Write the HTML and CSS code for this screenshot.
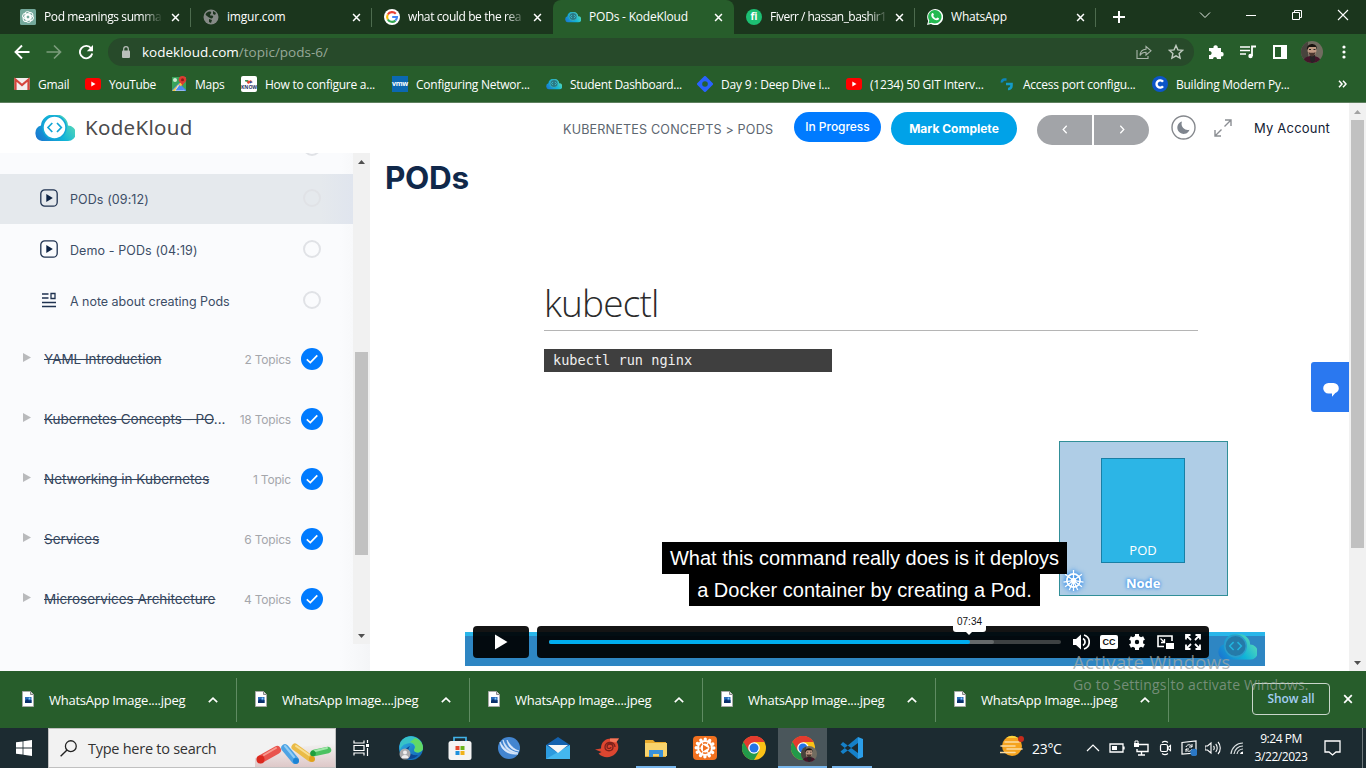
FILE: index.html
```html
<!DOCTYPE html>
<html lang="en">
<head>
<meta charset="utf-8">
<title>PODs - KodeKloud</title>
<link rel="stylesheet" href="styles.css">
</head>
<body>
<svg class="defs" width="0" height="0">
  <defs>
    <linearGradient id="cloudFill" x1="0" y1="0.8" x2="1" y2="0.3"><stop offset="0" stop-color="#1a78d0"/><stop offset=".5" stop-color="#10b4d8"/><stop offset="1" stop-color="#5fdcb4"/></linearGradient>
    <linearGradient id="edgeFill" x1="0" y1="0" x2="1" y2="1"><stop offset="0" stop-color="#2fb8e8"/><stop offset="1" stop-color="#0f5cb0"/></linearGradient>
    <symbol id="close" viewBox="0 0 10 10"><path d="M1.2 1.2 8.8 8.8M8.8 1.2 1.2 8.8" stroke="currentColor" stroke-width="1.7" fill="none"/></symbol>
    <symbol id="cloud" viewBox="0 0 40 26"><path d="M6 10.500a8 8 0 0 0 1 15.500h26a7.500 7.500 0 0 0 0-15.500A13 11 0 0 0 6 10.500z" fill="url(#cloudFill)"/></symbol>
    <symbol id="youtube" viewBox="0 0 16 12"><rect width="16" height="12" rx="3" fill="#f00"/><path d="M6.300 3.500v5l4.200-2.500z" fill="#fff"/></symbol>
    <symbol id="chrome" viewBox="0 0 24 24"><circle cx="12" cy="12" r="12" fill="#fbc116"/><path d="M12 12 1.600 6A12 12 0 0 1 22.400 6H12z" fill="#e33b2e"/><path d="M12 12 1.600 6A12 12 0 0 0 12 24l5.200-9z" fill="#229a4a"/><path d="M12 6h10.400A12 12 0 0 0 1.600 6l5.200 9z" fill="#e33b2e"/><circle cx="12" cy="12" r="5.800" fill="#fff"/><circle cx="12" cy="12" r="4.500" fill="#2374e8"/></symbol>
    <symbol id="face" viewBox="0 0 22 22"><clipPath id="faceClip"><circle cx="11" cy="11" r="11"/></clipPath><g clip-path="url(#faceClip)"><rect width="22" height="22" fill="#716c60"/><rect width="7" height="22" fill="#48443d"/><path d="M2 22c0-6 5-7 9-7s9 1 9 7z" fill="#44162a"/><path d="M9 14h5v6l-3 2-2-3z" fill="#262326"/><ellipse cx="11" cy="9" rx="4.500" ry="6" fill="#c09a83"/><path d="M6 9C5 1 17 1 16 9l-1-3H8z" fill="#18120f"/><path d="M7.500 11c1 6 6 6 7 0l-1.500.800h-4z" fill="#4b372f"/><path d="M8 8.500h2M12.500 8.500h2" stroke="#222"/></g></symbol>
    <symbol id="globe" viewBox="0 0 16 16"><circle cx="8" cy="8" r="7.500" fill="#858a86"/><path d="M3 4.500c2-2 4-2.500 5-1.500s-1 2-1 3 2 0 3 1-1 3-2 2.500S5 8 4 7 2 6 3 4.500zM10 2l3 2-1 2-2-1zM6 10l3 1-1 3-2-1z" fill="#1c331e"/></symbol>
    <symbol id="jpeg" viewBox="0 0 12 16"><path d="M.5.5h8l3 3v12H.5z" fill="#fff" stroke="#a8aaa8"/><path d="M8.500.5v3h3" fill="#d8d8d8" stroke="#888"/><rect x="3" y="6" width="6.500" height="6" fill="#2b6cb8"/><path d="m3 10 2-2 2 1.500 2.500-.5v3H3z" fill="#0b2f6a"/><circle cx="7.500" cy="7.500" r=".9" fill="#8acbff"/></symbol>
    <symbol id="up" viewBox="0 0 10 6"><path d="m.8 5.200 4.200-4 4.200 4" fill="none" stroke="currentColor" stroke-width="1.600"/></symbol>
    <symbol id="playbox" viewBox="0 0 18 18"><rect x=".8" y=".8" width="16.400" height="16.400" rx="4" fill="none" stroke="#1f3250" stroke-width="1.300"/><path d="M6.300 5v8l6.500-4z" fill="#0d2344"/></symbol>
    <symbol id="tri" viewBox="0 0 8 9"><path d="M0 0v9l8-4.500z" fill="#b9babc"/></symbol>
    <symbol id="check" viewBox="0 0 22 22"><circle cx="11" cy="11" r="11" fill="#007bff"/><path d="m5.800 11.400 3.500 3.200 7-7.200" fill="none" stroke="#fff" stroke-width="1.700"/></symbol>
  </defs>
</svg>

<div class="tabstrip">
  <div class="tab"><svg class="fav" viewBox="0 0 16 16"><rect width="16" height="16" rx="1.500" fill="#74a99b"/><g fill="none" stroke="#fff" stroke-width=".9"><rect x="5" y="2.500" width="5" height="8" rx="2.500"/><rect x="5" y="2.500" width="5" height="8" rx="2.500" transform="rotate(60 8 8)"/><rect x="5" y="2.500" width="5" height="8" rx="2.500" transform="rotate(120 8 8)"/><rect x="5" y="2.500" width="5" height="8" rx="2.500" transform="rotate(180 8 8)"/><rect x="5" y="2.500" width="5" height="8" rx="2.500" transform="rotate(240 8 8)"/><rect x="5" y="2.500" width="5" height="8" rx="2.500" transform="rotate(300 8 8)"/></g></svg><span class="ttl fade">Pod meanings summa</span><svg class="x"><use href="#close"/></svg></div>
  <div class="tab"><svg class="fav"><use href="#globe"/></svg><span class="ttl">imgur.com</span><svg class="x"><use href="#close"/></svg></div>
  <div class="tab flat"><svg class="fav" viewBox="0 0 16 16"><circle cx="8" cy="8" r="8" fill="#fff"/><g fill="none" stroke-width="2.100"><path d="M11.800 4.800A5 5 0 0 0 3.800 5.500" stroke="#ea4335"/><path d="M3.800 5.500a5 5 0 0 0 0 5" stroke="#fbbc05"/><path d="M3.800 10.500a5 5 0 0 0 7.600 1.100" stroke="#34a853"/><path d="M11.400 11.600A5 5 0 0 0 13 8H8.200" stroke="#4285f4"/></g></svg><span class="ttl fade">what could be the rea</span><svg class="x"><use href="#close"/></svg></div>
  <div class="tab active"><svg class="fav" viewBox="0 0 16 16"><use href="#cloud" y="3" width="16" height="10.500"/><circle cx="8" cy="7.500" r="4" fill="#2b7a85" stroke="#39b9cc" stroke-width=".7"/><path d="m7 6-1.500 1.500L7 9m2-3 1.500 1.500L9 9" fill="none" stroke="#44cbd8" stroke-width=".7"/></svg><span class="ttl">PODs - KodeKloud</span><svg class="x"><use href="#close"/></svg></div>
  <div class="tab"><span class="fav fiverr">fi</span><span class="ttl fade tight">Fiverr / hassan_bashir1</span><svg class="x"><use href="#close"/></svg></div>
  <div class="tab"><svg class="fav" viewBox="0 0 16 16"><path d="M0 16 1.200 12A8 8 0 1 1 4 14.900z" fill="#fff"/><path d="m1.500 14.500.8-3A6.700 6.700 0 1 1 4.800 13.700z" fill="#24b951"/><path d="M5 4.300c1-.9 1.200-.3 1.900 1.300.2.600-.7 1-.6 1.300.5 1.200 1.700 2.200 2.800 2.600.5 0 .9-1.200 1.300-1 2 .9 2 .9 1.300 2C10 12.500 6 10.500 4.700 8 4 6.500 4.100 5.200 5 4.300z" fill="#fff"/></svg><span class="ttl">WhatsApp</span><svg class="x"><use href="#close"/></svg></div>
  <svg class="plus" viewBox="0 0 12 12"><path d="M6 0v12M0 6h12" stroke="#fff" stroke-width="2"/></svg>
  <div class="win">
    <svg viewBox="0 0 12 12"><path d="m1 3.500 5 5 5-5" fill="none" stroke="#e5ebe5"/></svg>
    <svg viewBox="0 0 12 12"><path d="M1 6.500h10" stroke="#fff"/></svg>
    <svg viewBox="0 0 12 12"><path d="M1.500 3.500h7v7h-7zM3.500 3.500v-2h7v7h-2" fill="none" stroke="#fff"/></svg>
    <svg viewBox="0 0 12 12"><path d="m1 1 10 10M11 1 1 11" stroke="#fff" stroke-width="1.100"/></svg>
  </div>
</div>

<div class="toolbar">
  <svg class="nav" viewBox="0 0 16 16"><path d="M15.500 8H2M8 1.500 1.500 8 8 14.500" fill="none" stroke="#fff" stroke-width="1.900"/></svg>
  <svg class="nav dim" viewBox="0 0 16 16"><path d="M.5 8H14M8 1.500 14.500 8 8 14.500" fill="none" stroke="#7c9c7c" stroke-width="1.700"/></svg>
  <svg class="nav" viewBox="0 0 16 16"><path d="M13.200 4.500A6.200 6.200 0 1 0 14.200 9.500" fill="none" stroke="#fff" stroke-width="1.900"/><path d="M15 1v6.200H8.800z" fill="#fff"/></svg>
  <div class="omni">
    <svg class="lock" viewBox="0 0 8 12"><rect y="4.500" width="8" height="7.500" rx="1" fill="#b9bfba"/><path d="M1.700 5V3a2.300 2.300 0 0 1 4.600 0v2" fill="none" stroke="#b9bfba" stroke-width="1.200"/></svg>
    <span class="url">kodekloud.com<i>/topic/pods-6/</i></span>
    <svg class="share" viewBox="0 0 16 16"><path d="M1 6v8.500h11V12M4 11.500c.3-4 2.500-6 6-6.200V2.500l5 4.300-5 4.200V8.300c-2.600 0-4.500.7-6 3.200z" fill="none" stroke="#a9b6aa" stroke-width="1.100"/></svg>
    <svg class="star" viewBox="0 0 16 16"><path d="m8 1.500 1.900 4.400 4.800.4-3.600 3.200 1 4.700L8 11.800l-4.100 2.400 1-4.700L1.300 6.300l4.800-.4z" fill="none" stroke="#c0cbc0" stroke-width="1.400"/></svg>
  </div>
  <div class="actions">
    <svg viewBox="0 0 16 16"><path d="M1 4h4.500a2.200 2.200 0 1 1 4.200 0H13v4a2.200 2.200 0 1 1 0 4.300V15H9a2 2 0 1 0-4 0H1v-4a2 2 0 1 0 0-3.800z" fill="#fff"/></svg>
    <svg viewBox="0 0 16 16"><path d="M0 3h10M0 6.500h10M0 10h6" stroke="#fff" stroke-width="1.700"/><path d="M12 12V2.500h4" fill="none" stroke="#fff" stroke-width="1.800"/><circle cx="10.500" cy="12" r="2.200" fill="#fff"/></svg>
    <svg viewBox="0 0 16 16"><path d="M2 2h12v12H2z" fill="none" stroke="#fff" stroke-width="2"/><path d="M9 2h5v12H9z" fill="#fff"/></svg>
    <svg class="me"><use href="#face"/></svg>
    <svg viewBox="0 0 16 16"><g fill="#fff"><circle cx="8" cy="3" r="1.600"/><circle cx="8" cy="8" r="1.600"/><circle cx="8" cy="13" r="1.600"/></g></svg>
  </div>
</div>

<div class="bookmarks">
  <div class="bm"><svg viewBox="0 0 16 16"><rect x=".5" y="2" width="15" height="12" rx="1" fill="#f3eeee"/><path d="M1.500 14V3.500L8 9l6.500-5.500V14" fill="none" stroke="#d6453c" stroke-width="2.200"/></svg><span>Gmail</span></div>
  <div class="bm"><svg viewBox="0 -2 16 16"><use href="#youtube" width="16" height="12"/></svg><span>YouTube</span></div>
  <div class="bm"><svg viewBox="0 0 16 16"><path d="M1 1h14v14H1z" fill="#39a35a"/><path d="M1 14 8 7l7 7v1H1z" fill="#4a89f3"/><path d="M1 15 12 4l2 2-9 9z" fill="#f5ca43"/><path d="m7 9 7 6H4z" fill="#e8ebe8"/><path d="m8.500 9 5 5.500h-9z" fill="#4a89f3"/><circle cx="4" cy="4" r="2" fill="#ceebd1"/><path d="M11.500 0a3.800 3.800 0 0 1 3.800 3.800c0 2.500-2.800 3-3.800 6.500-1-3.500-3.800-4-3.800-6.500A3.800 3.800 0 0 1 11.500 0z" fill="#dc3c31"/><circle cx="11.500" cy="3.800" r="1.500" fill="#8c1d19"/></svg><span>Maps</span></div>
  <div class="bm"><span class="know"><svg viewBox="0 0 16 7"><path d="M5 3c2-2 3 1 5-1l1 2-4 2z" fill="#e4462e"/><path d="M4 2h3v1.500H4z" fill="#3b9a5d"/><path d="m9 3 3 1-3 1.500z" fill="#2b4e9d"/></svg><b>KNOW</b></span><span>How to configure a...</span></div>
  <div class="bm"><span class="vmw">vmw</span><span>Configuring Networ...</span></div>
  <div class="bm"><svg viewBox="0 0 16 16"><use href="#cloud" y="3" width="16" height="10.500"/><circle cx="8" cy="7.500" r="4" fill="#2b7a85" stroke="#39b9cc" stroke-width=".7"/><path d="m7 6-1.500 1.500L7 9m2-3 1.500 1.500L9 9" fill="none" stroke="#44cbd8" stroke-width=".7"/></svg><span>Student Dashboard...</span></div>
  <div class="bm"><svg viewBox="0 0 16 16"><path d="m8 1.500 6.500 6.500L8 14.500 1.500 8z" fill="#2962ff" stroke="#2962ff" stroke-width="3" stroke-linejoin="round"/><circle cx="8" cy="8" r="2.800" fill="#255f38"/></svg><span>Day 9 : Deep Dive i...</span></div>
  <div class="bm"><svg viewBox="0 -2 16 16"><use href="#youtube" width="16" height="12"/></svg><span>(1234) 50 GIT Interv...</span></div>
  <div class="bm"><svg viewBox="0 0 16 16"><path d="M7.500 3.500H5.500a2.500 2.500 0 0 0-2.500 3" fill="none" stroke="#0d86bd" stroke-width="2.600"/><path d="M7 8h5.500v1.500a3.300 3.300 0 0 1-3.500 3.500" fill="none" stroke="#149cc8" stroke-width="2.600"/></svg><span>Access port configu...</span></div>
  <div class="bm"><svg viewBox="0 0 16 16"><circle cx="8" cy="8" r="8" fill="#0b55c8"/><path d="M11 5.800a3.600 3.600 0 1 0 0 4.400" fill="none" stroke="#fff" stroke-width="2.400"/></svg><span>Building Modern Py...</span></div>
  <svg class="more" viewBox="0 0 9 8"><path d="m1 .8 3 3.200-3 3.200m4-6.400 3 3.200-3 3.200" fill="none" stroke="#fff" stroke-width="1.500"/></svg>
</div>

<div class="page">
  <div class="site">
    <header class="head">
      <svg class="logo" viewBox="0 0 40 26"><use href="#cloud" width="40" height="26"/><circle cx="19.500" cy="12.500" r="11.500" fill="#fff" stroke="#12a9d8" stroke-width="1.500"/><path d="m17.300 8-4.300 4.500 4.300 4.500m4.700-9 4.300 4.500-4.300 4.500" fill="none" stroke="#10a5d5" stroke-width="1.700"/></svg>
      <span class="brand">KodeKloud</span>
      <span class="crumb">KUBERNETES CONCEPTS &gt; PODS</span>
      <span class="progress">In Progress</span>
      <span class="mark">Mark Complete</span>
      <span class="pager"><span><svg viewBox="0 0 6 9"><path d="M4.700.8 1.200 4.500l3.500 3.700" fill="none" stroke="#fff" stroke-width="1.300"/></svg></span><span><svg viewBox="0 0 6 9"><path d="m1.300.8 3.500 3.700-3.500 3.700" fill="none" stroke="#fff" stroke-width="1.300"/></svg></span></span>
      <svg class="moon" viewBox="0 0 25 25"><circle cx="12.500" cy="12.500" r="11.500" fill="none" stroke="#85888d" stroke-width="1.400"/><path d="M11 6.500a6.300 6.300 0 1 0 7.500 8.300A6.300 6.300 0 0 1 11 6.500z" fill="#7f858e"/></svg>
      <svg class="expand" viewBox="0 0 18 18"><path d="M10.500 7.500 17 1M11 1h6v6M7.500 10.500 1 17m0-6v6h6" fill="none" stroke="#8b8e93" stroke-width="1.400"/></svg>
      <span class="account">My Account</span>
    </header>
    <div class="body">
      <aside class="side">
        <div class="list">
          <div class="lesson cut"><span></span><span class="name">p</span><i class="ring"></i></div>
          <div class="lesson sel"><svg><use href="#playbox"/></svg><span class="name">PODs (09:12)</span><i class="ring"></i></div>
          <div class="lesson"><svg><use href="#playbox"/></svg><span class="name">Demo - PODs (04:19)</span><i class="ring"></i></div>
          <div class="lesson"><svg viewBox="0 0 18 18"><path d="M2 3h6.500M2 7h6.500M2 11.500h14M2 15.500h14M11 2.500h4v5h-4z" fill="none" stroke="#1f3250" stroke-width="1.300"/></svg><span class="name">A note about creating Pods</span><i class="ring"></i></div>
          <div class="topics">
            <div class="topic"><svg class="t"><use href="#tri"/></svg><span class="name"><s>YAML Introduction</s></span><span class="n">2 Topics</span><svg class="ok"><use href="#check"/></svg></div>
            <div class="topic"><svg class="t"><use href="#tri"/></svg><span class="name"><s>Kubernetes Concepts - PO</s>...</span><span class="n">18 Topics</span><svg class="ok"><use href="#check"/></svg></div>
            <div class="topic"><svg class="t"><use href="#tri"/></svg><span class="name"><s>Networking in Kubernetes</s></span><span class="n">1 Topic</span><svg class="ok"><use href="#check"/></svg></div>
            <div class="topic"><svg class="t"><use href="#tri"/></svg><span class="name"><s>Services</s></span><span class="n">6 Topics</span><svg class="ok"><use href="#check"/></svg></div>
            <div class="topic"><svg class="t"><use href="#tri"/></svg><span class="name"><s>Microservices Architecture</s></span><span class="n">4 Topics</span><svg class="ok"><use href="#check"/></svg></div>
          </div>
        </div>
        <div class="bar inner"><svg viewBox="0 0 7 4"><path d="M0 4 3.500 0 7 4z" fill="#505050"/></svg><i></i><svg viewBox="0 0 7 4"><path d="M0 0h7L3.500 4z" fill="#505050"/></svg></div>
      </aside>
      <main class="main">
        <h1>PODs</h1>
        <div class="video">
          <div class="slide-title">kubectl</div>
          <div class="code">kubectl run nginx</div>
          <div class="node"><div class="pod">POD</div>
            <svg class="helm" viewBox="0 0 20 20"><g fill="none" stroke="#fff" stroke-width="1.200"><circle cx="10" cy="10" r="6.300" stroke-width="1.600"/><circle cx="10" cy="10" r="2"/><path d="M10 0v20M2 4l16 12M2 16 18 4M.5 11.500 10 10l9.500 1.500M6 19l4-9 4 9"/></g></svg>
            <b>Node</b></div>
          <div class="caption"><span>What this command really does is it deploys</span><span>a Docker container by creating a Pod.</span></div>
          <div class="band"><svg class="bandlogo" viewBox="0 0 40 26"><use href="#cloud" width="40" height="26"/><circle cx="18" cy="12" r="11" fill="#257aa8" stroke="#2a9dcc" stroke-width="1.500"/><path d="m16 8-4 4 4 4m4-8 4 4-4 4" fill="none" stroke="#22b5df" stroke-width="1.500"/></svg></div>
          <div class="controls">
            <div class="play"><svg viewBox="0 0 14 16"><path d="M1 .5v15l12.500-7.500z" fill="#fff"/></svg></div>
            <div class="strip">
              <div class="track"><i class="buf"></i><i class="done"></i><span class="tip">07:34</span></div>
              <svg viewBox="0 0 18 18"><path d="M1 6v6h3l5 4.500v-15L4 6z" fill="#fff"/><path d="M11 5.500a4 4 0 0 1 0 7M12 2a7.300 7.300 0 0 1 0 14" fill="none" stroke="#fff" stroke-width="1.700"/></svg>
              <span class="cc">CC</span>
              <svg viewBox="0 0 18 18"><circle cx="9" cy="9" r="4.200" fill="none" stroke="#fff" stroke-width="4"/><path d="M9 1v3M9 14v3M2 5l3 1.500M13 11.500l3 1.500M2 13l3-1.500M13 6.500 16 5" stroke="#fff" stroke-width="4"/></svg>
              <svg viewBox="0 0 18 18"><path d="M8 13.500H2V3h14v5" fill="none" stroke="#fff" stroke-width="1.600"/><path d="M10 10h8v6h-8z" fill="#fff"/><path d="m4.500 5.500 4 4m0-3.500v3.500H5" fill="none" stroke="#fff" stroke-width="1.300"/></svg>
              <svg viewBox="0 0 18 18"><path d="M2 6.500V2h4.500M11.500 2H16v4.500M16 11.500V16h-4.500M6.500 16H2v-4.500M2.500 2.500l4.500 4.500M15.500 2.500 11 7M15.500 15.500 11 11M2.500 15.500 7 11" fill="none" stroke="#fff" stroke-width="1.800"/></svg>
            </div>
          </div>
        </div>
        <div class="chat"><svg viewBox="0 0 16 14"><path d="M5.500 0h5a5.300 5.300 0 0 1 5.300 5.300c0 2.500-1.500 4-3.500 4.800L9 13.800V10.600H5.500A5.300 5.300 0 0 1 5.500 0z" fill="#fff"/></svg></div>
      </main>
    </div>
  </div>
  <div class="bar outer"><svg viewBox="0 0 7 4"><path d="M0 4 3.500 0 7 4z" fill="#a3a3a3"/></svg><i></i><svg viewBox="0 0 7 4"><path d="M0 0h7L3.500 4z" fill="#505050"/></svg></div>
</div>

<div class="downloads">
  <div class="dl"><svg class="f"><use href="#jpeg"/></svg><span>WhatsApp Image....jpeg</span><svg class="u"><use href="#up"/></svg></div>
  <div class="dl"><svg class="f"><use href="#jpeg"/></svg><span>WhatsApp Image....jpeg</span><svg class="u"><use href="#up"/></svg></div>
  <div class="dl"><svg class="f"><use href="#jpeg"/></svg><span>WhatsApp Image....jpeg</span><svg class="u"><use href="#up"/></svg></div>
  <div class="dl"><svg class="f"><use href="#jpeg"/></svg><span>WhatsApp Image....jpeg</span><svg class="u"><use href="#up"/></svg></div>
  <div class="dl"><svg class="f"><use href="#jpeg"/></svg><span>WhatsApp Image....jpeg</span><svg class="u"><use href="#up"/></svg></div>
  <div class="all">Show all</div>
  <svg class="x"><use href="#close"/></svg>
</div>

<div class="taskbar">
  <div class="start"><svg viewBox="0 0 16 16"><path d="M0 2.300 6.600 1.400v6.200H0zM7.400 1.300 16 0v7.600H7.400zM0 8.400h6.600v6.200L0 13.700zM7.400 8.400H16V16l-8.600-1.200z" fill="#fff"/></svg></div>
  <div class="search">
    <svg class="glass" viewBox="0 0 16 16"><circle cx="10.200" cy="5.800" r="5.100" fill="none" stroke="#222" stroke-width="1.200"/><path d="M6.600 9.400.6 15.400" stroke="#222" stroke-width="1.300"/></svg>
    <span>Type here to search</span>
    <svg class="chalk" viewBox="0 0 80 38"><defs><linearGradient id="pinkish" x2="0" y2="1"><stop offset="0" stop-color="#f2f2f2"/><stop offset="1" stop-color="#dec8c8"/></linearGradient></defs><path d="M0 38V29L26 20 80 14v24z" fill="url(#pinkish)"/><g stroke-linecap="round"><path d="M6 30 22 21" stroke="#e9534d" stroke-width="8"/><path d="m9 26 12-7" stroke="#f69a8e" stroke-width="2"/><circle cx="5.500" cy="30.500" r="4" fill="#db291e"/><path d="m30 19 10 12" stroke="#4da3e4" stroke-width="7.500"/><path d="m30 17 9 11" stroke="#93cdf4" stroke-width="2"/><circle cx="41" cy="32" r="3" fill="#1c83d4"/><path d="m40 18 15 11" stroke="#eabb47" stroke-width="7"/><path d="m41 17 13 9" stroke="#f8de92" stroke-width="2"/><circle cx="57" cy="30" r="3" fill="#e0a11a"/><path d="m59 24 14-3" stroke="#4bc261" stroke-width="6.500"/><path d="m60 22 12-3" stroke="#a2e7ab" stroke-width="2"/><circle cx="58" cy="24.500" r="2.800" fill="#1f9e3d"/></g></svg>
  </div>
  <div class="apps">
    <div><svg class="s16" viewBox="0 0 16 16"><path d="M1 .5v2.500h10V.5M1 15.500V13h10v2.500M1 5.500h10v5H1zM14.500 0v3M14.500 8v8" fill="none" stroke="#fff" stroke-width="1.200"/><path d="M13 4h3v3h-3z" fill="#fff"/></svg></div>
    <div><svg viewBox="0 0 24 24"><circle cx="12" cy="12" r="12" fill="url(#edgeFill)"/><path d="M1 8C4-2 22-3 24 12c0 5-9 6-9 2 3-5-3-8-8-6-2 0-5 3-6 6z" fill="#37c2c7"/><path d="M16 2c6 2 8 6 8 10 0 5-9 6-9 2 3-4 0-7-4-8z" fill="#61d966"/><path d="M11 10c-4 5 0 10 8 9-3 4-9 5-12 3-3-5-1-10 4-12z" fill="#0c4693"/><circle cx="6" cy="18" r="5.500" fill="#a9aaac"/><circle cx="6" cy="16.500" r="2" fill="#eee"/><path d="M2.500 22c0-4 7-4 7 0z" fill="#eee"/></svg></div>
    <div><svg viewBox="0 0 24 24"><path d="M6 6V1.500h12V6" fill="none" stroke="#41b2e8" stroke-width="1.700"/><rect x=".5" y="5" width="23" height="19" rx="2.500" fill="#f4f4f4"/><path d="M7.500 10h4v4h-4z" fill="#e3482e"/><path d="M12.500 10h4v4h-4z" fill="#6bb319"/><path d="M7.500 15h4v4h-4z" fill="#1e91dd"/><path d="M12.500 15h4v4h-4z" fill="#f0b31a"/></svg></div>
    <div><svg viewBox="0 0 24 24"><circle cx="12" cy="12" r="11" fill="#4385d0"/><path d="M3 6c1 8 8 13 18 12-9-1-14-5-18-12zM6 4c1 8 6 13 15 13-8-2-12-6-15-13zM10 4c1 6 4 10 12 11-6-2-9-6-12-11z" fill="#dce9fb" stroke="#dce9fb" stroke-width=".7"/></svg></div>
    <div><svg viewBox="0 0 24 24"><path d="M0 9 12 1l12 8v14H0z" fill="#1461ae"/><path d="m0 9v14h24V9l-12 8z" fill="#2c9bdf"/><path d="m0 23 12-7 12-7v14z" fill="#44b7ef"/><path d="M2 9h20l-10 8z" fill="#f7f7f7"/></svg></div>
    <div><svg viewBox="0 0 24 24"><path d="M0 13.500l6-1c0-7 5-10 10-10h8l-2.500 3c3 5 2 9-1 12-5 5-12 5-17 0l3-1.500z" fill="#dc4630"/><path d="M15 2.500h9l-3 4-6-1z" fill="#f4785a"/><path d="M20 11c0-6-10-6-10 0 0 5 8 5 8 0 0-4-6-4-6 0 0 2 4 2 4 0" fill="none" stroke="#7c211b" stroke-width="1.300"/></svg></div>
    <div class="run wide"><svg viewBox="0 0 24 24"><path d="M1 4h8l2 2h11v15H1z" fill="#e8aa2c"/><path d="M1 7h22v13H1z" fill="#f8d36c"/><path d="M5 21v-7h14v7h-4v-3H9v3z" fill="#3a92db"/></svg></div>
    <div><svg viewBox="0 0 24 24"><rect width="24" height="24" rx="4" fill="#f1711f"/><circle cx="12" cy="12" r="8.800" fill="none" stroke="#fff" stroke-width="3.400" stroke-linecap="round" stroke-dasharray=".01 4.598"/><circle cx="12" cy="12" r="8" fill="#fff"/><circle cx="12" cy="12" r="5.200" fill="none" stroke="#f1711f" stroke-width="1.600" stroke-dasharray="4.400 1.050"/><path d="M10 8.800v6.400l5.500-3.200z" fill="#f1711f"/></svg></div>
    <div><svg><use href="#chrome"/></svg></div>
    <div class="run hot"><svg viewBox="0 0 24 24"><use href="#chrome" width="24" height="24"/><use href="#face" x="10" y="10" width="16" height="16"/></svg></div>
    <div class="run"><svg viewBox="0 0 24 24"><path d="m18 1 5 2v18l-5 2z" fill="#2b9ee9"/><path d="M18 1v6L3 18 .5 15.500zM18 23v-6L3 6 .5 8.500z" fill="#1580c8"/></svg></div>
  </div>
  <div class="weather"><svg viewBox="0 0 24 22"><circle cx="12" cy="11" r="10" fill="#f5a31e"/><path d="M6 3h12a10 10 0 0 0-12 0z" fill="#fbd33d"/><path d="M5 7h14M1 11h14M7 14h15M0 17.500h15" stroke="#fbdba0" stroke-width="1.600" stroke-linecap="round"/><circle cx="21" cy="4" r="3" fill="#c42b1c"/></svg><span>23°C</span></div>
  <div class="tray">
    <svg viewBox="0 0 16 16"><path d="m2 11 6-6 6 6" fill="none" stroke="#fff" stroke-width="1.200"/></svg>
    <svg viewBox="0 0 16 16"><path d="M1 4h13v8H1zM15 6.500v3" fill="none" stroke="#fff" stroke-width="1.300"/><path d="M3 6h5v4H3z" fill="#fff"/></svg>
    <svg viewBox="0 0 16 16"><path d="M6 4.500h9v7H4V9M8.500 12v3M5 15h7" fill="none" stroke="#fff" stroke-width="1.400"/><path d="M1 3h5v4H1z" fill="#fff"/><path d="M2 3V1h3v2" fill="none" stroke="#fff"/></svg>
    <svg viewBox="0 0 16 16"><rect x="3.500" y="4.500" width="7" height="7" rx="1.500" fill="none" stroke="#fff" stroke-width="1.200"/><path d="m11 7.500 2.500-2v5L11 8.500M5 2.500c2-1.500 4-1.500 6 0M5 13.500c2 1.500 4 1.500 6 0" fill="none" stroke="#fff" stroke-width="1.100"/></svg>
    <svg viewBox="0 0 16 16"><path d="M1 2.500 15 1v12l-14 1z" fill="none" stroke="#fff" stroke-width="1.200"/><path d="M5 7c1-3 5-3 6 0m0-3v3H8M11 9c-1 3-5 3-6 0m0 3V9h3" fill="none" stroke="#fff"/><circle cx="13" cy="12.500" r="3.700" fill="#2b78c5"/></svg>
    <svg viewBox="0 0 16 16"><path d="M0 6v4h2.500L6 13V3L2.500 6zM8.500 6c1 1 1 3 0 4M10.700 4c2 2 2 6 0 8M13 2c3 3 3 9 0 12" fill="none" stroke="#fff" stroke-width="1.100"/></svg>
    <svg viewBox="0 0 16 16"><path d="M2 14A12 12 0 0 1 14 3M5 14a9 9 0 0 1 9-8M8 14a6 6 0 0 1 6-5" fill="none" stroke="#dce2e3" stroke-width="1.200"/><path d="M11 14a3 3 0 0 1 3-2.500V14z" fill="#fff"/></svg>
  </div>
  <div class="clock"><span>9:24 PM</span><span>3/22/2023</span></div>
  <svg class="note" viewBox="0 0 17 16"><path d="M1 1h15v11h-4l-3.500 3L5 12H1z" fill="none" stroke="#fff" stroke-width="1.300"/></svg>
  <i class="peek"></i>
</div>

<div class="watermark"><span>Activate Windows</span><span>Go to Settings to activate Windows.</span></div>
</body>
</html>
```
FILE: styles.css
```css
* { box-sizing: border-box; }
body { margin: 0; width: 1366px; height: 768px; overflow: hidden; display: flex; flex-direction: column; background: #fff; font-family: "Open Sans", "Noto Sans", sans-serif; font-size: 12px; color: #fff; position: relative; white-space: nowrap; }
svg { display: block; flex: none; }
i { font-style: normal; }
.defs { position: absolute; }

.tabstrip { height: 34px; flex: none; display: flex; align-items: center; background: #1b361d; padding-left: 10px; }
.tab { width: 181px; height: 34px; flex: none; display: flex; align-items: center; padding: 0 11px 0 10px; position: relative; }
.tab::after { content: ""; position: absolute; right: 0; top: 8px; width: 1px; height: 19px; background: #4d6b4e; }
.tab.flat::after, .tab.active::after { display: none; }
.tab.active { background: #275d2b; border-radius: 8px 8px 0 0; padding-left: 12px; }
.tab + .tab { padding-left: 12px; }
.fav { width: 16px; height: 16px; flex: none; }
.fiverr { border-radius: 50%; background: #1dbf73; font-weight: 700; font-size: 10px; line-height: 15px; text-align: center; }
.ttl { flex: none; width: 117px; margin-left: 8px; overflow: hidden; letter-spacing: -0.2px; line-height: 18px; }
.fade { letter-spacing: -.4px; width: 119px; margin-right: -4px; -webkit-mask-image: linear-gradient(90deg, #000 82%, transparent); mask-image: linear-gradient(90deg, #000 82%, transparent); }
.tight { letter-spacing: -.55px; }
.x { width: 9px; height: 9px; margin-left: auto; }
.plus { width: 12px; height: 12px; margin-left: 17px; }
.win { margin-left: auto; display: flex; gap: 34px; padding: 0 17px 5px 0; }
.win svg { width: 12px; height: 12px; }

.toolbar { height: 34px; flex: none; background: #275d2b; display: flex; align-items: center; padding-top: 2px; }
.nav { width: 16px; height: 16px; margin-left: 14px; margin-right: 2px; }
.omni { width: 1086px; height: 28px; margin-left: 12px; border-radius: 14px; background: #274a2a; display: flex; align-items: center; padding: 0 10px 0 14px; }
.lock { width: 8px; height: 12px; }
.url { margin-left: 12px; flex: 1; font-size: 13.500px; letter-spacing: 0; }
.url i { color: #97a898; }
.share { width: 16px; height: 16px; margin-right: 16px; }
.star { width: 16px; height: 16px; }
.actions { display: flex; align-items: center; margin-left: 14px; gap: 16px; }
.actions svg { width: 16px; height: 16px; }
.actions .me { width: 22px; height: 22px; margin: 0 -3px; }

.bookmarks { height: 35px; flex: none; background: #275d2b; border-bottom: 1px solid #5d7f5e; display: flex; align-items: center; padding: 0 0 2px 14px; }
.bm { display: flex; align-items: center; gap: 8px; letter-spacing: -0.25px; flex: none; width: 151px; }
.bm > svg, .know, .vmw { width: 16px; height: 16px; flex: none; }
.bm:nth-child(1) { width: 71px; }
.bm:nth-child(2) { width: 86px; letter-spacing: -.35px; }
.bm:nth-child(3) { width: 70px; }
.bm:nth-child(5) { width: 154px; }
.bm:nth-child(6) { letter-spacing: -.33px; }
.bm:nth-child(7) { width: 149px; letter-spacing: -.2px; }
.bm:nth-child(8) { width: 153px; letter-spacing: -.2px; }
.bm:nth-child(9) { width: 153px; }
.bm:nth-child(10) { width: 186px; }
.know { background: #fff; border-radius: 2px; color: #27355f; padding-top: 2px; overflow: hidden; }
.know svg { width: 16px; height: 7px; }
.know b { display: block; font-size: 5px; line-height: 5px; text-align: center; letter-spacing: 0; }
.vmw { background: #0b68b1; font-size: 7px; font-weight: 700; line-height: 15px; text-align: center; }
.more { width: 9px; height: 8px; }

.page { height: 568px; flex: none; display: flex; color: #1d2f4b; font-family: Inter, sans-serif; }
.site { width: 1349px; flex: none; display: flex; flex-direction: column; }
.head { height: 50px; flex: none; display: flex; align-items: center; padding-left: 35px; }
.logo { width: 40px; height: 26px; }
.brand { width: 488px; padding-left: 10px; font: 20.500px "Noto Sans", sans-serif; letter-spacing: .3px; color: #4b4b4d; margin-top: -2px; flex: none; }
.crumb { width: 231px; flex: none; font-size: 12.600px; letter-spacing: .17px; color: #5d6670; padding-top: 2px; }
.progress { width: 87px; height: 30px; line-height: 30px; text-align: center; background: #007bff; color: #fff; border-radius: 15px; font-size: 12px; font-weight: 500; letter-spacing: -.05px; margin-top: -2px; }
.mark { width: 126px; height: 33px; line-height: 33px; text-align: center; background: #00a2e8; color: #fff; border-radius: 17px; font-size: 12px; font-weight: 700; margin: 1px 0 0 10px; }
.pager { display: flex; gap: 2px; margin: 3px 0 0 20px; border-radius: 15px; overflow: hidden; }
.pager span { width: 55px; height: 30px; background: #a2a4a8; display: flex; align-items: center; justify-content: center; }
.pager svg { width: 6px; height: 9px; }
.moon { width: 25px; height: 25px; margin: -2px 0 0 22px; }
.expand { width: 18px; height: 18px; margin: -1px 0 0 18px; }
.account { font-size: 13px; margin-left: 22px; letter-spacing: .2px; color: #122033; }
.body { display: flex; height: 518px; }
.side { width: 370px; flex: none; display: flex; background: linear-gradient(90deg, #fafbfd 340px, #f4f5f7); }
.list { width: 353px; overflow: hidden; display: flex; flex-direction: column; }
.lesson { height: 50px; flex: none; margin-bottom: 1px; display: grid; grid-template-columns: 30px 1fr 18px; align-items: center; padding: 0 32px 0 40px; font-size: 12.500px; color: #3c4d66; }
.lesson svg { width: 18px; height: 18px; margin-top: -2px; }
.lesson .name { padding-top: 0; letter-spacing: -.03px; }
.lesson:nth-child(-n+3) .name { letter-spacing: .1px; }
.lesson.cut { margin-top: -30px; }
.lesson.cut .name { padding-left: 91px; margin-top: -5px; }
.lesson.sel { background: linear-gradient(90deg, #e5e9ed 320px, #e0e5ee); }
.ring { width: 18px; height: 18px; border: 2px solid #e0e2e6; border-radius: 50%; margin-top: -3px; }
.topics { padding-top: 2px; }
.topic { height: 60px; display: flex; align-items: center; padding: 0 30px 0 23px; color: #34455c; font-size: 13.500px; }
.topic .t { width: 8px; height: 9px; margin-top: -3px; }
.topic .name { margin-left: 13px; flex: 1; letter-spacing: -.02px; }
.n { font-size: 12px; letter-spacing: -.2px; color: #a4a6ab; margin-right: 10px; }
.ok { width: 22px; height: 22px; }
.bar { width: 17px; flex: none; background: #f1f1f1; display: flex; flex-direction: column; align-items: center; padding: 7px 0 6px; }
.bar svg { width: 7px; height: 4px; }
.bar i { width: 13px; background: #c1c1c1; }
.bar.inner { height: 491px; }
.bar.inner i { height: 203px; margin: 188px 0 auto; }
.bar.outer { height: 568px; }
.bar.outer i { height: 428px; margin: 6px 0 auto; }

.main { width: 979px; position: relative; background: #fff; }
h1 { margin: 0; padding: 4px 0 0 15px; font-size: 31.500px; line-height: 41px; font-weight: 700; color: #10284a; letter-spacing: -.3px; }
.video { position: absolute; left: 95px; top: 63px; width: 800px; height: 450px; overflow: hidden; font-family: "Open Sans", sans-serif; }
.slide-title { position: absolute; left: 79px; top: 58px; width: 654px; height: 57px; border-bottom: 1px solid #b5b5b5; font-size: 37px; font-weight: 300; line-height: 58px; color: #2b2b2b; letter-spacing: -.85px; }
.code { position: absolute; left: 79px; top: 133px; width: 288px; height: 23px; background: #3f3f3f; color: #eee; font: 13.600px/22px "DejaVu Sans Mono", monospace; padding-left: 9px; }
.node { position: absolute; left: 594px; top: 225px; width: 169px; height: 155px; background: #afcde6; border: 1px solid #318f98; color: #fff; }
.pod { position: absolute; left: 41px; top: 16px; width: 84px; height: 105px; background: #2cb5e6; border: 1px solid #197fa5; display: flex; align-items: flex-end; justify-content: center; font-size: 13px; line-height: 24px; }
.node b { position: absolute; left: 66px; top: 130px; font-size: 13px; line-height: 22px; text-shadow: 0 0 3px #3a8ee8, 0 0 4px #4a9bee; }
.helm { position: absolute; left: 3px; top: 128px; width: 21px; height: 21px; filter: drop-shadow(0 0 2px #3f92e8) drop-shadow(0 0 2px #4f9dec); }
.caption { position: absolute; left: 197px; top: 326px; width: 405px; display: flex; flex-direction: column; align-items: center; font: 20px/32px "Liberation Sans", sans-serif; color: #fff; }
.caption span { background: #000; padding: 0 8px; }
.band { position: absolute; left: 0; right: 0; bottom: 0; height: 34px; background: #2e86c3; border-top: 4px solid #29b6ea; }
.bandlogo { position: absolute; right: 8px; top: -2px; width: 39px; height: 26px; }
.controls { position: absolute; left: 8px; right: 56px; bottom: 8px; height: 32px; display: flex; gap: 8px; }
.play, .strip { background: rgba(0, 0, 0, .92); border-radius: 4px; display: flex; align-items: center; }
.play { width: 56px; justify-content: center; }
.play svg { width: 14px; height: 16px; }
.strip { flex: 1; padding: 0 7px 0 12px; gap: 10px; }
.strip > svg { width: 18px; height: 18px; }
.track { width: 512px; height: 4px; border-radius: 2px; background: #3d4143; position: relative; margin-right: 1px; }
.track i { position: absolute; left: 0; top: 0; height: 4px; border-radius: 2px; }
.buf { width: 445px; background: #65696b; }
.done { width: 421px; background: #00adef; }
.tip { position: absolute; left: 404px; top: -28px; width: 33px; height: 20px; background: #fff; color: #111; font: 10px/19px "Liberation Sans", sans-serif; text-align: center; border-radius: 3px; }
.tip::after { content: ""; position: absolute; left: 13px; top: 20px; border: 3px solid transparent; border-top-color: #fff; }
.cc { width: 18px; height: 14px; background: #fff; border-radius: 2px; color: #111; font: 700 9px/14px "Liberation Sans", sans-serif; text-align: center; }
.chat { position: absolute; right: 0; top: 209px; width: 38px; height: 50px; background: #2a78f0; border-radius: 3px 0 0 3px; display: flex; align-items: center; justify-content: center; padding: 5px 0 0 2px; }
.chat svg { width: 16px; height: 14px; }

.downloads { height: 57px; flex: none; background: #275d2b; display: flex; align-items: center; }
.dl { width: 233px; height: 44px; display: flex; align-items: center; border-right: 1px solid #5f8b62; padding: 0 18px 0 18px; flex: none; }
.dl:first-child { width: 237px; padding-left: 22px; }
.dl .f { width: 12px; height: 16px; margin-top: -2px; }
.dl span { font-size: 13px; margin-left: 15px; letter-spacing: -.26px; }
.dl .u { width: 10px; height: 6px; margin-left: auto; }
.all { width: 78px; height: 32px; margin-left: 83px; margin-top: -2px; border: 1px solid #c9d6ca; border-radius: 4px; color: #a4cdf3; font-weight: 600; line-height: 29px; letter-spacing: -.15px; text-align: center; }
.downloads .x { margin: -2px 13px 0 auto; width: 10px; height: 10px; }

.taskbar { height: 40px; flex: none; background: #1c2b31; display: flex; align-items: center; }
.start { width: 48px; display: flex; justify-content: center; }
.start svg { width: 16px; height: 16px; }
.search { width: 288px; height: 40px; background: #f2f2f2; border: 1px solid #c0c0c0; color: #333; font-size: 14.500px; display: flex; align-items: center; padding-left: 11px; letter-spacing: -.26px; }
.glass { width: 17px; height: 17px; margin-right: 11px; }
.chalk { width: 80px; height: 38px; margin-left: auto; }
.apps { display: flex; align-items: center; height: 40px; padding-left: 1px; }
.apps > div { width: 49px; height: 40px; display: flex; align-items: center; justify-content: center; position: relative; }
.apps > div:first-child { padding-right: 2px; }
.apps svg { width: 24px; height: 24px; overflow: visible; }
.apps .s16 { width: 16px; height: 16px; }
.run::after { content: ""; position: absolute; left: 5px; width: 40px; bottom: 0; height: 2px; background: #78b6ec; }
.run.hot { background: #4a565b; }
.run.hot::after { left: 0; width: 49px; }
.weather { display: flex; align-items: center; gap: 8px; margin-left: 124px; width: 85px; font-size: 14px; letter-spacing: -.3px; }
.weather svg { width: 24px; height: 22px; margin-top: -4px; }
.tray { display: flex; gap: 8px; }
.tray svg { width: 16px; height: 16px; }
.clock { width: 72px; display: flex; flex-direction: column; align-items: center; line-height: 18px; letter-spacing: -.45px; }
.note { width: 17px; height: 16px; margin-left: 7px; }
.peek { width: 1px; height: 40px; background: #6f797c; margin-left: auto; margin-right: 3px; }

.watermark { position: absolute; left: 1073px; top: 649px; display: flex; flex-direction: column; color: rgba(160, 168, 166, .75); font-size: 18.500px; letter-spacing: .37px; line-height: 26px; }
.watermark span + span { font-size: 14px; line-height: 19px; color: rgba(170, 176, 174, .6); letter-spacing: .18px; }
```
